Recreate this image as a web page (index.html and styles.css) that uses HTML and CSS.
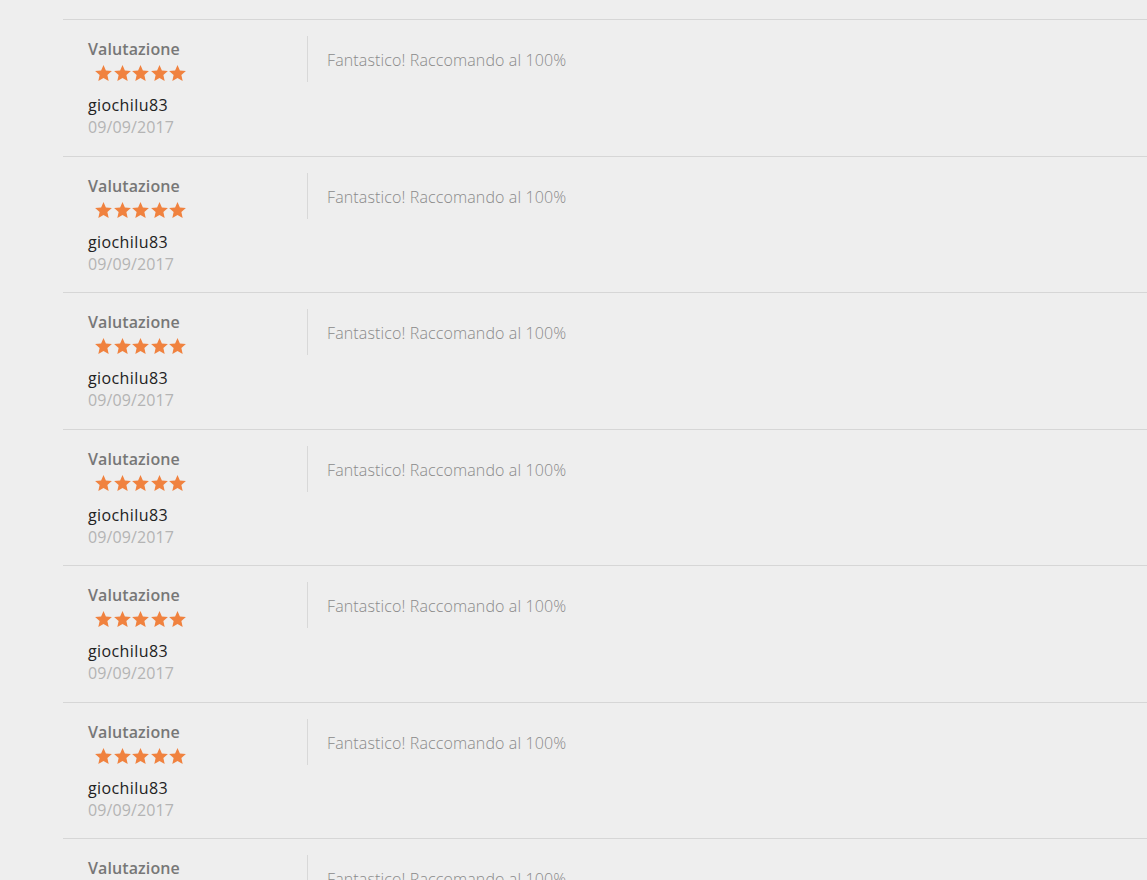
FILE: index.html
```html
<!DOCTYPE html>
<html lang="it">
<head>
<meta charset="utf-8">
<title>Recensioni</title>
<link rel="stylesheet" href="styles.css">
</head>
<body>
<svg width="0" height="0" style="position:absolute">
  <defs>
    <symbol id="star" viewBox="0.6 0.4 24.8 23.6">
      <path d="M13 0.4L16.53 8.55 25.36 9.38 18.71 15.25 20.64 23.92 13 19.4 5.36 23.92 7.29 15.25 0.64 9.38 9.47 8.55z" stroke-linejoin="round"/>
    </symbol>
  </defs>
</svg>
<div class="reviews">
  <div class="review">
    <div class="meta">
      <div class="label">Valutazione</div>
      <div class="stars"><svg class="star"><use href="#star"/></svg><svg class="star"><use href="#star"/></svg><svg class="star"><use href="#star"/></svg><svg class="star"><use href="#star"/></svg><svg class="star"><use href="#star"/></svg></div>
      <div class="user">giochilu83</div>
      <div class="date">09/09/2017</div>
    </div>
    <div class="comment">Fantastico! Raccomando al 100%</div>
  </div>
  <div class="review">
    <div class="meta">
      <div class="label">Valutazione</div>
      <div class="stars"><svg class="star"><use href="#star"/></svg><svg class="star"><use href="#star"/></svg><svg class="star"><use href="#star"/></svg><svg class="star"><use href="#star"/></svg><svg class="star"><use href="#star"/></svg></div>
      <div class="user">giochilu83</div>
      <div class="date">09/09/2017</div>
    </div>
    <div class="comment">Fantastico! Raccomando al 100%</div>
  </div>
  <div class="review">
    <div class="meta">
      <div class="label">Valutazione</div>
      <div class="stars"><svg class="star"><use href="#star"/></svg><svg class="star"><use href="#star"/></svg><svg class="star"><use href="#star"/></svg><svg class="star"><use href="#star"/></svg><svg class="star"><use href="#star"/></svg></div>
      <div class="user">giochilu83</div>
      <div class="date">09/09/2017</div>
    </div>
    <div class="comment">Fantastico! Raccomando al 100%</div>
  </div>
  <div class="review">
    <div class="meta">
      <div class="label">Valutazione</div>
      <div class="stars"><svg class="star"><use href="#star"/></svg><svg class="star"><use href="#star"/></svg><svg class="star"><use href="#star"/></svg><svg class="star"><use href="#star"/></svg><svg class="star"><use href="#star"/></svg></div>
      <div class="user">giochilu83</div>
      <div class="date">09/09/2017</div>
    </div>
    <div class="comment">Fantastico! Raccomando al 100%</div>
  </div>
  <div class="review">
    <div class="meta">
      <div class="label">Valutazione</div>
      <div class="stars"><svg class="star"><use href="#star"/></svg><svg class="star"><use href="#star"/></svg><svg class="star"><use href="#star"/></svg><svg class="star"><use href="#star"/></svg><svg class="star"><use href="#star"/></svg></div>
      <div class="user">giochilu83</div>
      <div class="date">09/09/2017</div>
    </div>
    <div class="comment">Fantastico! Raccomando al 100%</div>
  </div>
  <div class="review">
    <div class="meta">
      <div class="label">Valutazione</div>
      <div class="stars"><svg class="star"><use href="#star"/></svg><svg class="star"><use href="#star"/></svg><svg class="star"><use href="#star"/></svg><svg class="star"><use href="#star"/></svg><svg class="star"><use href="#star"/></svg></div>
      <div class="user">giochilu83</div>
      <div class="date">09/09/2017</div>
    </div>
    <div class="comment">Fantastico! Raccomando al 100%</div>
  </div>
  <div class="review">
    <div class="meta">
      <div class="label">Valutazione</div>
      <div class="stars"><svg class="star"><use href="#star"/></svg><svg class="star"><use href="#star"/></svg><svg class="star"><use href="#star"/></svg><svg class="star"><use href="#star"/></svg><svg class="star"><use href="#star"/></svg></div>
      <div class="user">giochilu83</div>
      <div class="date">09/09/2017</div>
    </div>
    <div class="comment">Fantastico! Raccomando al 100%</div>
  </div>
</div>
</body>
</html>
```
FILE: styles.css
```css
html, body {
  margin: 0;
  padding: 0;
  height: 100%;
  overflow: hidden;
  background: #eeeeee;
}
body {
  font-family: "Open Sans", "Liberation Sans", sans-serif;
  font-size: 16px;
  line-height: 22px;
}
.reviews {
  padding-top: 19px;
  margin-left: 63px;
}
.review {
  display: flex;
  align-items: flex-start;
  border-top: 1px solid #d6d6d6;
  padding: 16px 0 17.5px 25px;
}
.meta {
  width: 219px;
  padding-top: 2px;
}
.label {
  font-weight: 600;
  color: #777777;
  letter-spacing: 0.1px;
}
.stars {
  display: flex;
  gap: 1.5px;
  height: 29px;
  padding: 5px 0 0 7px;
}
.star {
  width: 17px;
  height: 16px;
  fill: #f0823f;
}
.user {
  color: #222222;
  letter-spacing: 0.4px;
}
.date {
  color: #b4b4b4;
  letter-spacing: 0.1px;
}
.comment {
  border-left: 1px solid #d8d8d8;
  min-height: 33px;
  padding: 13px 0 0 19px;
  font-weight: 300;
  color: #8a8a8a;
  letter-spacing: 0.13px;
}
```
